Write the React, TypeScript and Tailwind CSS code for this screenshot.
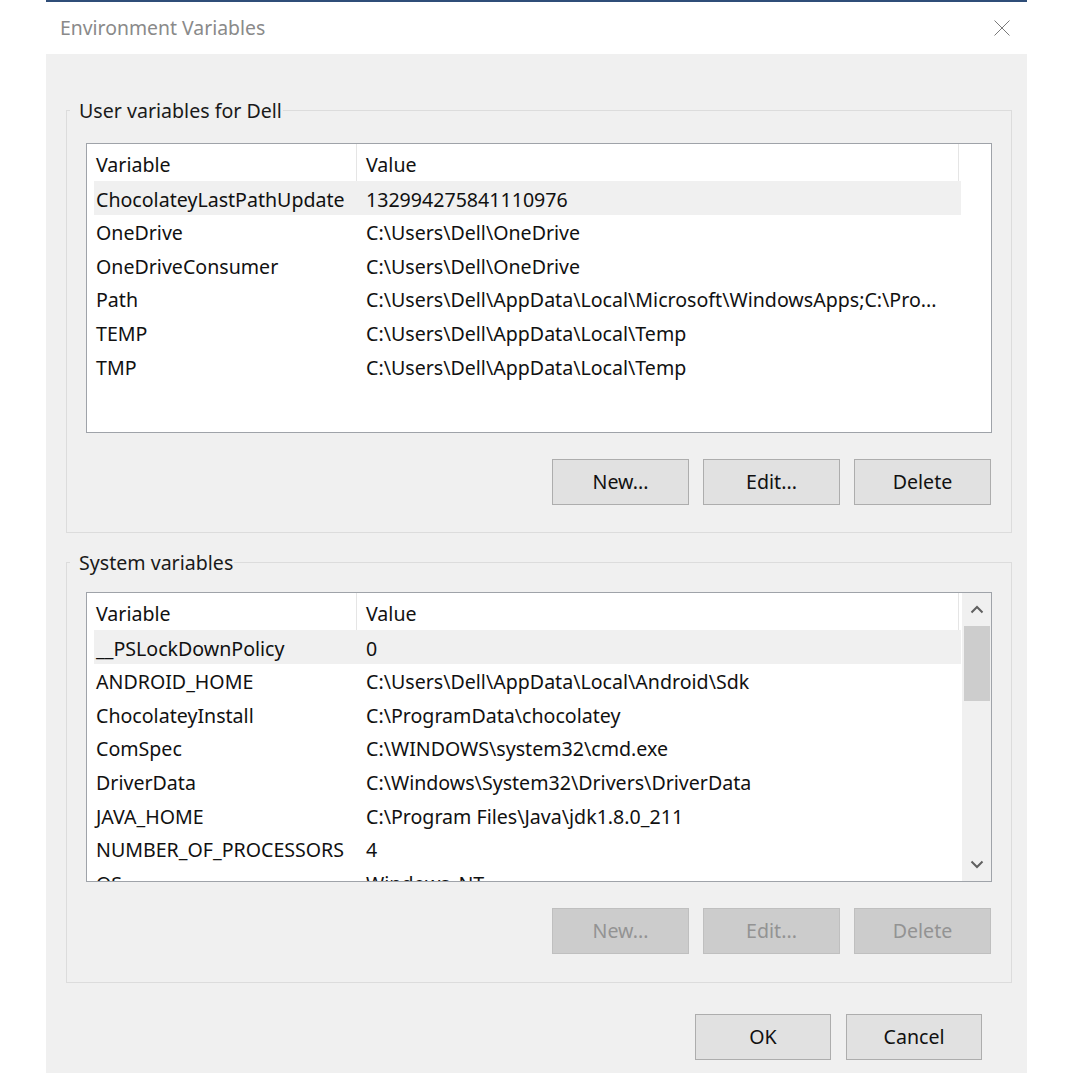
import React from 'react';

type Row = [string, string];

const userVars: Row[] = [
  ['ChocolateyLastPathUpdate', '132994275841110976'],
  ['OneDrive', 'C:\\Users\\Dell\\OneDrive'],
  ['OneDriveConsumer', 'C:\\Users\\Dell\\OneDrive'],
  ['Path', 'C:\\Users\\Dell\\AppData\\Local\\Microsoft\\WindowsApps;C:\\Pro...'],
  ['TEMP', 'C:\\Users\\Dell\\AppData\\Local\\Temp'],
  ['TMP', 'C:\\Users\\Dell\\AppData\\Local\\Temp'],
];

const systemVars: Row[] = [
  ['__PSLockDownPolicy', '0'],
  ['ANDROID_HOME', 'C:\\Users\\Dell\\AppData\\Local\\Android\\Sdk'],
  ['ChocolateyInstall', 'C:\\ProgramData\\chocolatey'],
  ['ComSpec', 'C:\\WINDOWS\\system32\\cmd.exe'],
  ['DriverData', 'C:\\Windows\\System32\\Drivers\\DriverData'],
  ['JAVA_HOME', 'C:\\Program Files\\Java\\jdk1.8.0_211'],
  ['NUMBER_OF_PROCESSORS', '4'],
  ['OS', 'Windows_NT'],
];

function Button({ label, disabled, wide = true }: { label: string; disabled?: boolean; wide?: boolean }) {
  const w = wide ? 'w-[137px]' : 'w-[136px]';
  return (
    <button
      className={
        disabled
          ? w + ' h-[46px] border border-[#bfbfbf] bg-[#cccccc] text-[#939393]'
          : w + ' h-[46px] border border-[#adadad] bg-[#e1e1e1] text-[#111]'
      }
    >
      {label}
    </button>
  );
}

function VarList({ rows, scroll }: { rows: Row[]; scroll?: boolean }) {
  return (
    <div className="relative h-[290px] border border-[#9fa3a9] bg-white overflow-hidden flex">
      <div className="flex-1 flex flex-col">
        {/* header */}
        <div className="flex h-[37px] shrink-0">
          <div className="w-[270px] pl-[9px] pt-[4px] flex items-center border-r border-[#e5e5e5]">Variable</div>
          <div className="w-[602px] pl-[9px] pt-[4px] flex items-center border-r border-[#e5e5e5]">Value</div>
        </div>
        {rows.map(([name, value], i) => (
          <div
            key={name}
            className={
              i === 0
                ? 'ml-[7px] w-[867px] h-[33.6px] shrink-0 flex items-center pt-[3px] bg-[#f0f0f0]'
                : 'ml-[7px] w-[867px] h-[33.6px] shrink-0 flex items-center pt-[3px]'
            }
          >
            <div className="w-[263px] pl-[2px] whitespace-nowrap">{name}</div>
            <div className="pl-[9px] whitespace-nowrap">{value}</div>
          </div>
        ))}
      </div>
      {scroll && (
        <div className="w-[29px] shrink-0 bg-[#f0f0f0] flex flex-col items-center">
          <div className="h-[33px] w-full flex items-center justify-center">
            <svg width="14" height="9" viewBox="0 0 14 9" fill="none">
              <path d="M1.5 7.5 L7 2 L12.5 7.5" stroke="#606060" strokeWidth="2" />
            </svg>
          </div>
          <div className="w-[26px] h-[75px] bg-[#cdcdcd]" />
          <div className="flex-1" />
          <div className="h-[33px] w-full flex items-center justify-center">
            <svg width="14" height="9" viewBox="0 0 14 9" fill="none">
              <path d="M1.5 1.5 L7 7 L12.5 1.5" stroke="#606060" strokeWidth="2" />
            </svg>
          </div>
        </div>
      )}
    </div>
  );
}

function Group({ title, rows, scroll, disabled, className }: { title: string; rows: Row[]; scroll?: boolean; disabled?: boolean; className: string }) {
  return (
    <fieldset className={'w-[946px] border border-[#dcdcdc] ' + className}>
      <legend className="ml-[3px] pl-[9px] pr-[1px] pt-[2px] leading-[26px] text-[#1a1a1a]">{title}</legend>
      <div className="px-[19px]">
        <VarList rows={rows} scroll={scroll} />
        <div className="flex justify-end gap-[14px] pr-[1px] mt-[26px]">
          <Button label="New..." disabled={disabled} />
          <Button label="Edit..." disabled={disabled} />
          <Button label="Delete" disabled={disabled} />
        </div>
      </div>
    </fieldset>
  );
}

export default function App() {
  return (
    <div className="min-h-screen bg-white font-['Noto_Sans','Open_Sans',sans-serif] text-[19.6px] text-[#111]">
      <div className="ml-[46px] w-[981px] border-t-2 border-[#2f4d78]">
        {/* title bar */}
        <div className="h-[52px] flex items-center justify-between pl-[14px] pr-[17px]">
          <span className="text-[#8a8a8a] text-[19.4px]">Environment Variables</span>
          <svg width="16" height="16" viewBox="0 0 16 16">
            <path d="M0.5 0.5 L15.5 15.5 M15.5 0.5 L0.5 15.5" stroke="#7a7a7a" strokeWidth="1" />
          </svg>
        </div>
        {/* body */}
        <div className="bg-[#f0f0f0] h-[1019px] pt-[42px] pl-[20px]">
          <Group title="User variables for Dell" rows={userVars} className="pt-[19px] pb-[27px]" />
          <Group title="System variables" rows={systemVars} scroll disabled className="mt-[15px] pt-[16px] pb-[28px]" />
          <div className="flex justify-end gap-[15px] pr-[45px] mt-[31px]">
            <Button label="OK" wide={false} />
            <Button label="Cancel" wide={false} />
          </div>
        </div>
      </div>
    </div>
  );
}
